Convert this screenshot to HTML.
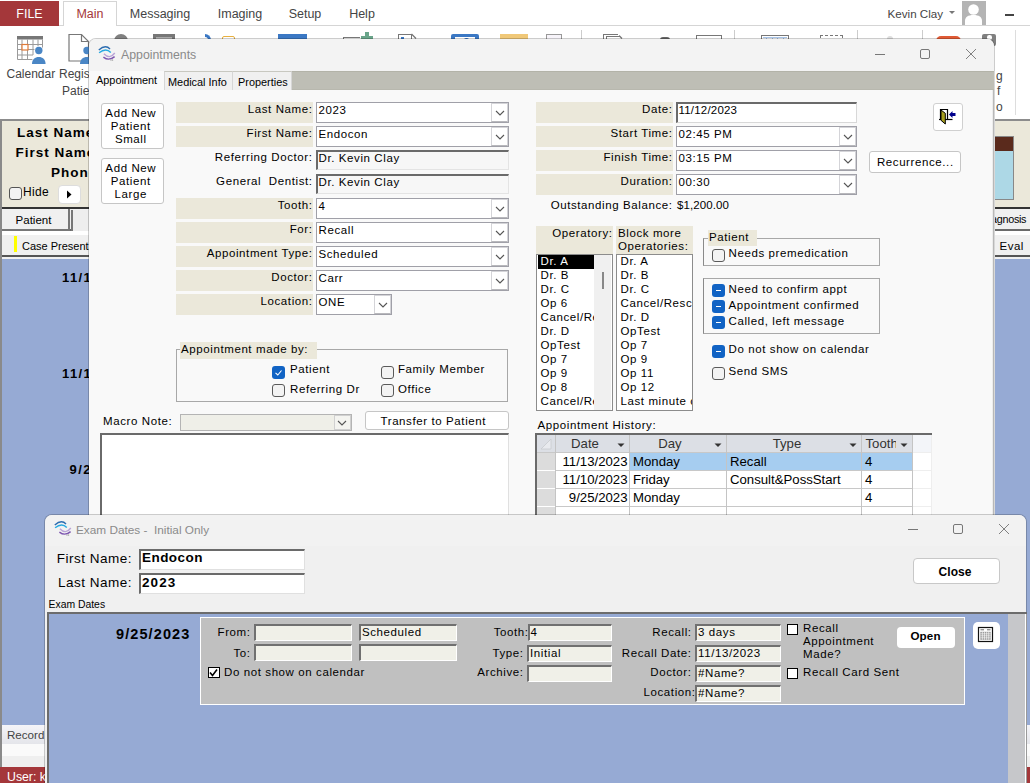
<!DOCTYPE html><html><head><meta charset="utf-8"><style>
*{margin:0;padding:0;box-sizing:border-box}
html,body{width:1030px;height:783px;overflow:hidden;background:#fff;position:relative;font-family:"Liberation Sans",sans-serif;color:#000}
.t{position:absolute;white-space:nowrap;line-height:1}
.r{position:absolute}
</style></head><body>
<div class="r" style="left:0px;top:0px;width:1030px;height:26px;background:#fff"></div>
<div class="r" style="left:0px;top:25px;width:1030px;height:1px;background:#d5d5d5"></div>
<div class="r" style="left:0px;top:1px;width:59px;height:25px;background:#a4373a"></div>
<div class="t" style="left:-0.5px;width:60px;text-align:center;top:7.92px;font-size:12.5px;color:#fff;">FILE</div>
<div class="r" style="left:63px;top:1px;width:54px;height:25px;background:#fff;border:1px solid #d5d5d5;border-bottom:none"></div>
<div class="t" style="left:60.0px;width:60px;text-align:center;top:8.42px;font-size:12.5px;color:#a4373a;">Main</div>
<div class="t" style="left:120.0px;width:80px;text-align:center;top:8.42px;font-size:12.5px;color:#444;">Messaging</div>
<div class="t" style="left:200.0px;width:80px;text-align:center;top:8.42px;font-size:12.5px;color:#444;">Imaging</div>
<div class="t" style="left:265.0px;width:80px;text-align:center;top:8.42px;font-size:12.5px;color:#444;">Setup</div>
<div class="t" style="left:322.0px;width:80px;text-align:center;top:8.42px;font-size:12.5px;color:#444;">Help</div>
<div class="t" style="left:843px;width:100px;text-align:right;top:7.68px;font-size:11.6px;color:#444;">Kevin Clay</div>
<svg class="r" style="left:948px;top:10px" width="8" height="6"><path d="M1 1h6l-3 3z" fill="#777"/></svg>
<div class="r" style="left:962px;top:1px;width:24px;height:24px;background:#b4b4b4"></div>
<svg class="r" style="left:962px;top:1px" width="24" height="24"><circle cx="11.5" cy="8.5" r="5.3" fill="#fff"/><path d="M3 24V20c0-4 3-6 8.5-6s8.5 2 8.5 6V24z" fill="#fff"/></svg>
<div class="r" style="left:1005px;top:14px;width:9px;height:2px;background:#444"></div>
<div class="r" style="left:0px;top:119px;width:1030px;height:2px;background:#8c8c8c"></div>
<svg class="r" style="left:16px;top:35px" width="32" height="32">
<rect x="1" y="1" width="26" height="3.5" fill="#777"/>
<path d="M1.5 4.5V24.5H27M26.5 4.5V14M1.5 9.5H26.5M1.5 14.5H26.5M1.5 20H17M6 4.5V24.5M11.5 4.5V24.5M17 4.5V20M22 4.5V12" stroke="#9a9a9a" stroke-width="1" fill="none"/>
<rect x="6" y="9.5" width="6" height="5.5" fill="#fff" stroke="#e07b39" stroke-width="1.2"/>
<circle cx="22.8" cy="15.5" r="4.6" fill="#fff"/><path d="M14.5 30c0-5 3.5-8.5 8.3-8.5s8.3 3.5 8.3 8.5z" fill="#fff"/>
<circle cx="22.8" cy="15.5" r="3.7" fill="#4a86c5"/><path d="M16 29c0-4.5 3-7 6.8-7s6.8 2.5 6.8 7z" fill="#4a86c5"/>
</svg>
<div class="t" style="left:6.5px;top:68.34px;font-size:12px;color:#444;">Calendar</div>
<svg class="r" style="left:68px;top:33px" width="24" height="32">
<path d="M1 1.5h12.5l7 7V28H1z" fill="#fff" stroke="#777" stroke-width="1.2"/><path d="M13.5 1.5v7h7" fill="none" stroke="#777" stroke-width="1.2"/>
<circle cx="19" cy="17.5" r="3.7" fill="#4a86c5"/><path d="M12 31c0-4.5 3-7 7-7s7 2.5 7 7z" fill="#4a86c5"/>
</svg>
<div class="t" style="left:59px;top:68.34px;font-size:12px;color:#444;">Regist</div>
<div class="t" style="left:62px;top:84.84px;font-size:12px;color:#444;">Patien</div>
<div class="r" style="left:114px;top:34px;width:14px;height:10px;background:#808080;border-radius:7px 7px 0 0"></div>
<div class="r" style="left:153px;top:34px;width:22px;height:8px;background:#777"></div>
<div class="r" style="left:156px;top:37px;width:16px;height:3px;background:#aaa"></div>
<div class="r" style="left:205px;top:34px;width:6px;height:8px;border-top:3px solid #3b78c4;border-right:3px solid #3b78c4;border-radius:0 8px 0 0"></div>
<div class="r" style="left:222px;top:36px;width:13px;height:6px;border:1.5px solid #e8b040;border-radius:2px"></div>
<div class="r" style="left:278px;top:34px;width:29px;height:8px;background:#3b78c4"></div>
<div class="r" style="left:343px;top:37px;width:17px;height:6px;border-top:1.5px solid #777;border-left:1.5px solid #777"></div>
<div class="r" style="left:365px;top:32px;width:4px;height:8px;background:#6aa58a"></div>
<div class="r" style="left:361px;top:36px;width:12px;height:4px;background:#6aa58a"></div>
<div class="r" style="left:398px;top:34px;width:14px;height:8px;border:1.5px solid #777;border-bottom:none"></div>
<svg class="r" style="left:411px;top:33px" width="6" height="6"><path d="M0.5 1L5 5.5" stroke="#777" stroke-width="1.3"/></svg>
<div class="r" style="left:401px;top:37px;width:3px;height:2px;background:#3b78c4"></div>
<div class="r" style="left:451px;top:34px;width:28px;height:8px;background:#3b78c4;border-radius:2px 2px 0 0"></div>
<div class="r" style="left:455px;top:37px;width:20px;height:6px;background:#fff"></div>
<div class="r" style="left:464px;top:38px;width:5px;height:2px;background:#3b78c4;border-radius:2px 2px 0 0"></div>
<div class="r" style="left:500px;top:34px;width:28px;height:8px;background:#f0c878"></div>
<div class="r" style="left:546px;top:34px;width:16px;height:8px;border:1.5px solid #999;background:#f7f4fa;border-bottom:none"></div>
<div class="r" style="left:581px;top:30px;width:1px;height:12px;background:#ccc"></div>
<div class="r" style="left:603px;top:34px;width:15px;height:8px;border-top:1.5px solid #777;border-left:1.5px solid #777"></div>
<div class="r" style="left:606px;top:36px;width:14px;height:6px;border:1.5px solid #777;border-bottom:none;border-right:none;background:#fff"></div>
<svg class="r" style="left:619px;top:35px" width="4" height="4"><path d="M0 0.5L3 3.5" stroke="#777" stroke-width="1.3"/></svg>
<div class="r" style="left:660px;top:36.5px;width:10px;height:5px;background:#666;border-radius:3px 3px 0 0"></div>
<div class="r" style="left:696px;top:35px;width:26px;height:8px;border:1.5px solid #777;border-bottom:none"></div>
<div class="r" style="left:734px;top:30px;width:1px;height:12px;background:#ccc"></div>
<div class="r" style="left:761px;top:35px;width:28px;height:8px;border:1.5px solid #777;border-bottom:none;background:#fff"></div>
<div class="r" style="left:766px;top:36.5px;width:1px;height:4px;background:#a8c4e8"></div>
<div class="r" style="left:772px;top:36.5px;width:1px;height:4px;background:#a8c4e8"></div>
<div class="r" style="left:777px;top:36.5px;width:1px;height:4px;background:#a8c4e8"></div>
<div class="r" style="left:783px;top:36.5px;width:1px;height:4px;background:#a8c4e8"></div>
<div class="r" style="left:763px;top:37px;width:24px;height:1px;background:#a8c4e8"></div>
<div class="r" style="left:820px;top:35px;width:23px;height:8px;border:1.5px dashed #777;border-bottom:none"></div>
<div class="r" style="left:857px;top:30px;width:1px;height:12px;background:#ccc"></div>
<div class="r" style="left:887px;top:36px;width:6px;height:4px;background:#ddd;border-radius:3px 3px 0 0"></div>
<div class="r" style="left:922px;top:30px;width:1px;height:12px;background:#ccc"></div>
<div class="r" style="left:936px;top:36px;width:25px;height:8px;background:#e05a35;border-radius:5px 5px 0 0"></div>
<div class="r" style="left:982px;top:34px;width:14px;height:12px;background:#808080;border-radius:2px"></div>
<div class="r" style="left:987px;top:35px;width:4.5px;height:4.5px;background:#fff;border-radius:50%"></div>
<div class="r" style="left:1015px;top:30px;width:1px;height:85px;background:#ddd"></div>
<div class="t" style="left:996px;top:69.84px;font-size:12px;color:#444;">g</div>
<div class="t" style="left:997px;top:84.84px;font-size:12px;color:#444;">f</div>
<div class="t" style="left:996px;top:100.84px;font-size:12px;color:#444;">o</div>
<div class="r" style="left:0px;top:121px;width:1030px;height:86px;background:#ebe8da"></div>
<div class="t" style="left:17px;top:126.17px;font-size:13.5px;font-weight:bold;letter-spacing:1.0px;">Last Name</div>
<div class="t" style="left:15.5px;top:146.07px;font-size:13.5px;font-weight:bold;letter-spacing:1.0px;">First Name</div>
<div class="t" style="left:51px;top:165.77px;font-size:13.5px;font-weight:bold;letter-spacing:1.0px;">Phone</div>
<div class="r" style="left:9px;top:187px;width:13px;height:13px;background:#f3f3f3;border:1px solid #555;border-radius:3px"></div>
<div class="t" style="left:23px;top:185.84px;font-size:12px;letter-spacing:0.3px;">Hide</div>
<div class="r" style="left:58px;top:185px;width:23px;height:19px;background:#fff;border:1px solid #ddd;border-radius:4px"></div>
<svg class="r" style="left:66px;top:190px" width="8" height="9"><path d="M1 0.5L5.5 4.5L1 8.5z" fill="#000"/></svg>
<div class="r" style="left:994px;top:136px;width:20px;height:64px;background:#add8e6;border:1px solid #888"></div>
<div class="r" style="left:994px;top:137px;width:19px;height:14px;background:#5a2a1c"></div>
<div class="r" style="left:0px;top:207px;width:1030px;height:2px;background:#333"></div>
<div class="r" style="left:0px;top:209px;width:1030px;height:22px;background:#f0f0f0;border-bottom:2px solid #6a6a6a"></div>
<div class="r" style="left:0px;top:209px;width:70px;height:22px;background:#f0f0f0;border-right:2px solid #777;border-bottom:2px solid #777"></div>
<div class="t" style="left:-1.5px;width:70px;text-align:center;top:214.96px;font-size:11.5px;">Patient</div>
<div class="r" style="left:71px;top:210px;width:20px;height:21px;background:#eee;border-left:2px solid #777"></div>
<div class="t" style="left:966.2px;width:60px;text-align:right;top:214.36px;font-size:10.8px;letter-spacing:-0.3px;">agnosis</div>
<div class="r" style="left:0px;top:231px;width:1030px;height:4px;background:#fff"></div>
<div class="r" style="left:0px;top:235px;width:1030px;height:20px;background:#f0f0f0"></div>
<div class="r" style="left:14px;top:236px;width:3px;height:16px;background:#ff0"></div>
<div class="t" style="left:22px;top:241.19px;font-size:11px;">Case Presentation</div>
<div class="t" style="left:999.5px;top:240.76px;font-size:11.5px;letter-spacing:0.5px;">Eval</div>
<div class="r" style="left:0px;top:255px;width:1030px;height:2px;background:#555"></div>
<div class="r" style="left:0px;top:257px;width:1030px;height:2px;background:#f0f0f0"></div>
<div class="r" style="left:2px;top:259px;width:1028px;height:467px;background:#96aad4"></div>
<div class="t" style="left:62px;top:271.49px;font-size:13px;font-weight:bold;letter-spacing:1.4px;">11/14/2023</div>
<div class="t" style="left:62px;top:367.49px;font-size:13px;font-weight:bold;letter-spacing:1.4px;">11/13/2023</div>
<div class="t" style="left:69.5px;top:463.49px;font-size:13px;font-weight:bold;letter-spacing:1.4px;">9/25/2023</div>
<div class="r" style="left:2px;top:725px;width:1028px;height:19px;background:linear-gradient(#f4f4f8,#e4e5ea)"></div>
<div class="t" style="left:7px;top:728.88px;font-size:11.6px;color:#444;">Record:</div>
<div class="r" style="left:2px;top:744px;width:1028px;height:12px;background:#fafafa"></div>
<div class="r" style="left:2px;top:756px;width:1028px;height:11px;background:#efefef"></div>
<div class="r" style="left:0px;top:121px;width:2px;height:646px;background:#8a8a8a"></div>
<div class="r" style="left:0px;top:767px;width:1030px;height:16px;background:#a4373a"></div>
<div class="t" style="left:7px;top:771.09px;font-size:12.3px;color:#fff;">User: kevin</div>
<div class="r" style="left:88px;top:38px;width:907px;height:480px;background:#f9f9f9;border:1px solid rgba(0,0,0,0.2);border-radius:8px 8px 0 0;background-clip:padding-box"></div>
<div class="r" style="left:89px;top:39px;width:905px;height:32px;background:#f3f3f3;border-radius:7px 7px 0 0"></div>
<svg class="r" style="left:98px;top:45px" width="19" height="17">
<path d="M0.8 4.9Q7.4 -1 12 3.9" stroke="#2b6cb0" stroke-width="1.4" fill="none"/>
<path d="M1.1 7.8Q7.85 2.15 12.8 7.5" stroke="#27a9e1" stroke-width="1.4" fill="none"/>
<path d="M5.9 8.8Q11.65 14.8 16.8 8" stroke="#b9a3d8" stroke-width="1.4" fill="none"/>
<path d="M5.4 12.1Q11 16.35 16.6 11.6" stroke="#7d55b0" stroke-width="1.4" fill="none"/>
<circle cx="13" cy="15" r="0.6" fill="#777"/><circle cx="14.6" cy="15" r="0.6" fill="#777"/>
</svg>
<div class="t" style="left:121px;top:48.69px;font-size:12.3px;color:#8a8a8a;">Appointments</div>
<div class="r" style="left:875px;top:54px;width:10px;height:1px;background:#777"></div>
<div class="r" style="left:920px;top:49px;width:10px;height:10px;border:1px solid #777;border-radius:2px"></div>
<svg class="r" style="left:965px;top:48px" width="12" height="12"><path d="M1 1L11 11M11 1L1 11" stroke="#808080" stroke-width="1"/></svg>
<div class="r" style="left:89px;top:71px;width:905px;height:19px;background:#bebeb5;border-top:1px solid #b3b3a8;border-bottom:1px solid #b8b8ae"></div>
<div class="r" style="left:89px;top:71px;width:75px;height:20px;background:#f9f9f9"></div>
<div class="r" style="left:164px;top:71px;width:69px;height:19px;background:#f0f0f0;border:1px solid #d6d6d6;border-bottom:none;border-top-color:#c8c8c0"></div>
<div class="r" style="left:232px;top:71px;width:60px;height:19px;background:#f0f0f0;border:1px solid #d6d6d6;border-bottom:none;border-top-color:#c8c8c0"></div>
<div class="t" style="left:96px;top:75.27px;font-size:10.9px;">Appointment</div>
<div class="t" style="left:168px;top:77.07px;font-size:10.9px;">Medical Info</div>
<div class="t" style="left:238px;top:77.07px;font-size:10.9px;">Properties</div>
<div class="r" style="left:89px;top:90px;width:905px;height:1px;background:#f9f9f9"></div>
<div class="r" style="left:101px;top:103px;width:63px;height:46px;background:#fff;border:1px solid #c6c6c6;border-radius:3px"></div>
<div class="t" style="left:89.30000000000001px;width:83px;text-align:center;top:107.96px;font-size:11.5px;letter-spacing:0.6px;">Add New</div>
<div class="t" style="left:89.30000000000001px;width:83px;text-align:center;top:120.96px;font-size:11.5px;letter-spacing:0.6px;">Patient</div>
<div class="t" style="left:89.30000000000001px;width:83px;text-align:center;top:133.96px;font-size:11.5px;letter-spacing:0.6px;">Small</div>
<div class="r" style="left:101px;top:158px;width:63px;height:46px;background:#fff;border:1px solid #c6c6c6;border-radius:3px"></div>
<div class="t" style="left:89.30000000000001px;width:83px;text-align:center;top:162.96px;font-size:11.5px;letter-spacing:0.6px;">Add New</div>
<div class="t" style="left:89.30000000000001px;width:83px;text-align:center;top:175.96px;font-size:11.5px;letter-spacing:0.6px;">Patient</div>
<div class="t" style="left:89.30000000000001px;width:83px;text-align:center;top:188.96px;font-size:11.5px;letter-spacing:0.6px;">Large</div>
<div class="r" style="left:176px;top:102px;width:137px;height:21px;background:#ebe8da"></div>
<div class="r" style="left:316px;top:102px;width:193px;height:21px;background:#fff;border:1px solid #a0a0a8"></div>
<div class="r" style="left:491px;top:103px;width:17px;height:19px;background:#fff;border:1px solid #d4d4d8;border-bottom-color:#b8b8bc"></div>
<svg class="r" style="left:495px;top:109.5px" width="10" height="6"><path d="M1 1L5 5L9 1" stroke="#555" stroke-width="1.1" fill="none"/></svg>
<div class="t" style="left:318.5px;top:104.76px;font-size:11.5px;letter-spacing:0.6px;">2023</div>
<div class="t" style="left:172.60000000000002px;width:140px;text-align:right;top:104.06px;font-size:11.5px;letter-spacing:0.6px;">Last Name:</div>
<div class="r" style="left:176px;top:126px;width:137px;height:21px;background:#ebe8da"></div>
<div class="r" style="left:316px;top:126px;width:193px;height:21px;background:#fff;border:1px solid #a0a0a8"></div>
<div class="r" style="left:491px;top:127px;width:17px;height:19px;background:#fff;border:1px solid #d4d4d8;border-bottom-color:#b8b8bc"></div>
<svg class="r" style="left:495px;top:133.5px" width="10" height="6"><path d="M1 1L5 5L9 1" stroke="#555" stroke-width="1.1" fill="none"/></svg>
<div class="t" style="left:318.5px;top:128.76px;font-size:11.5px;letter-spacing:0.6px;">Endocon</div>
<div class="t" style="left:172.60000000000002px;width:140px;text-align:right;top:128.06px;font-size:11.5px;letter-spacing:0.6px;">First Name:</div>
<div class="r" style="left:316px;top:150px;width:193px;height:20px;background:#f7f7f7;border-top:2px solid #6a6a6a;border-left:2px solid #6a6a6a;border-right:1px solid #e4e4e4;border-bottom:1px solid #e4e4e4"></div>
<div class="t" style="left:318.5px;top:152.76px;font-size:11.5px;letter-spacing:0.6px;">Dr. Kevin Clay</div>
<div class="t" style="left:172.60000000000002px;width:140px;text-align:right;top:152.06px;font-size:11.5px;letter-spacing:0.6px;">Referring Doctor:</div>
<div class="r" style="left:316px;top:174px;width:193px;height:20px;background:#f7f7f7;border-top:2px solid #6a6a6a;border-left:2px solid #6a6a6a;border-right:1px solid #e4e4e4;border-bottom:1px solid #e4e4e4"></div>
<div class="t" style="left:318.5px;top:176.76px;font-size:11.5px;letter-spacing:0.6px;">Dr. Kevin Clay</div>
<div class="t" style="left:172.60000000000002px;width:140px;text-align:right;top:176.06px;font-size:11.5px;letter-spacing:0.6px;">General&nbsp; Dentist:</div>
<div class="r" style="left:176px;top:198px;width:137px;height:21px;background:#ebe8da"></div>
<div class="r" style="left:316px;top:198px;width:193px;height:21px;background:#fff;border:1px solid #a0a0a8"></div>
<div class="r" style="left:491px;top:199px;width:17px;height:19px;background:#fff;border:1px solid #d4d4d8;border-bottom-color:#b8b8bc"></div>
<svg class="r" style="left:495px;top:205.5px" width="10" height="6"><path d="M1 1L5 5L9 1" stroke="#555" stroke-width="1.1" fill="none"/></svg>
<div class="t" style="left:318.5px;top:200.76px;font-size:11.5px;letter-spacing:0.6px;">4</div>
<div class="t" style="left:172.60000000000002px;width:140px;text-align:right;top:200.06px;font-size:11.5px;letter-spacing:0.6px;">Tooth:</div>
<div class="r" style="left:176px;top:222px;width:137px;height:21px;background:#ebe8da"></div>
<div class="r" style="left:316px;top:222px;width:193px;height:21px;background:#fff;border:1px solid #a0a0a8"></div>
<div class="r" style="left:491px;top:223px;width:17px;height:19px;background:#fff;border:1px solid #d4d4d8;border-bottom-color:#b8b8bc"></div>
<svg class="r" style="left:495px;top:229.5px" width="10" height="6"><path d="M1 1L5 5L9 1" stroke="#555" stroke-width="1.1" fill="none"/></svg>
<div class="t" style="left:318.5px;top:224.76px;font-size:11.5px;letter-spacing:0.6px;">Recall</div>
<div class="t" style="left:172.60000000000002px;width:140px;text-align:right;top:224.06px;font-size:11.5px;letter-spacing:0.6px;">For:</div>
<div class="r" style="left:176px;top:246px;width:137px;height:21px;background:#ebe8da"></div>
<div class="r" style="left:316px;top:246px;width:193px;height:21px;background:#fff;border:1px solid #a0a0a8"></div>
<div class="r" style="left:491px;top:247px;width:17px;height:19px;background:#fff;border:1px solid #d4d4d8;border-bottom-color:#b8b8bc"></div>
<svg class="r" style="left:495px;top:253.5px" width="10" height="6"><path d="M1 1L5 5L9 1" stroke="#555" stroke-width="1.1" fill="none"/></svg>
<div class="t" style="left:318.5px;top:248.76px;font-size:11.5px;letter-spacing:0.6px;">Scheduled</div>
<div class="t" style="left:172.60000000000002px;width:140px;text-align:right;top:248.06px;font-size:11.5px;letter-spacing:0.6px;">Appointment Type:</div>
<div class="r" style="left:176px;top:270px;width:137px;height:21px;background:#ebe8da"></div>
<div class="r" style="left:316px;top:270px;width:193px;height:21px;background:#fff;border:1px solid #a0a0a8"></div>
<div class="r" style="left:491px;top:271px;width:17px;height:19px;background:#fff;border:1px solid #d4d4d8;border-bottom-color:#b8b8bc"></div>
<svg class="r" style="left:495px;top:277.5px" width="10" height="6"><path d="M1 1L5 5L9 1" stroke="#555" stroke-width="1.1" fill="none"/></svg>
<div class="t" style="left:318.5px;top:272.76px;font-size:11.5px;letter-spacing:0.6px;">Carr</div>
<div class="t" style="left:172.60000000000002px;width:140px;text-align:right;top:272.06px;font-size:11.5px;letter-spacing:0.6px;">Doctor:</div>
<div class="r" style="left:176px;top:294px;width:137px;height:21px;background:#ebe8da"></div>
<div class="r" style="left:316px;top:294px;width:76px;height:21px;background:#fff;border:1px solid #a0a0a8"></div>
<div class="r" style="left:374px;top:295px;width:17px;height:19px;background:#fff;border:1px solid #d4d4d8;border-bottom-color:#b8b8bc"></div>
<svg class="r" style="left:378px;top:301.5px" width="10" height="6"><path d="M1 1L5 5L9 1" stroke="#555" stroke-width="1.1" fill="none"/></svg>
<div class="t" style="left:318.5px;top:296.76px;font-size:11.5px;letter-spacing:0.6px;">ONE</div>
<div class="t" style="left:172.60000000000002px;width:140px;text-align:right;top:296.06px;font-size:11.5px;letter-spacing:0.6px;">Location:</div>
<div class="r" style="left:176px;top:349px;width:332px;height:53px;border:1px solid #a8a8a8;border-top-color:#a8a8a8"></div>
<div class="r" style="left:180px;top:342px;width:137px;height:16.5px;background:#ebe8da"></div>
<div class="t" style="left:181px;top:344.26px;font-size:11.5px;letter-spacing:0.6px;">Appointment made by:</div>
<div class="r" style="left:272px;top:366px;width:13px;height:13px;background:#1163c4;border-radius:3px"></div>
<svg class="r" style="left:272px;top:366px" width="13" height="13"><path d="M3.5 6.8L5.8 9L9.5 4.5" stroke="#fff" stroke-width="1.1" fill="none"/></svg>
<div class="t" style="left:290px;top:364.26px;font-size:11.5px;letter-spacing:0.6px;">Patient</div>
<div class="r" style="left:381px;top:366px;width:13px;height:13px;background:#f3f3f3;border:1px solid #5a5a5a;border-radius:3px"></div>
<div class="t" style="left:398px;top:364.26px;font-size:11.5px;letter-spacing:0.6px;">Family Member</div>
<div class="r" style="left:272px;top:384px;width:13px;height:13px;background:#f3f3f3;border:1px solid #5a5a5a;border-radius:3px"></div>
<div class="t" style="left:290px;top:384.26px;font-size:11.5px;letter-spacing:0.6px;">Referring Dr</div>
<div class="r" style="left:381px;top:384px;width:13px;height:13px;background:#f3f3f3;border:1px solid #5a5a5a;border-radius:3px"></div>
<div class="t" style="left:398px;top:384.26px;font-size:11.5px;letter-spacing:0.6px;">Office</div>
<div class="t" style="left:103px;top:416.26px;font-size:11.5px;letter-spacing:0.6px;">Macro Note:</div>
<div class="r" style="left:180px;top:414px;width:172px;height:17px;background:#efefe8;border:1px solid #b4b4b4"></div>
<div class="r" style="left:334px;top:415px;width:17px;height:15px;background:#f4f4f0;border:1px solid #d0d0d0"></div>
<svg class="r" style="left:337px;top:420px" width="10" height="6"><path d="M1 1L5 5L9 1" stroke="#555" stroke-width="1.1" fill="none"/></svg>
<div class="r" style="left:365px;top:411px;width:144px;height:19px;background:#fff;border:1px solid #c6c6c6;border-radius:3px"></div>
<div class="t" style="left:351.3px;width:164px;text-align:center;top:415.76px;font-size:11.5px;letter-spacing:0.6px;">Transfer to Patient</div>
<div class="r" style="left:100px;top:433px;width:409px;height:90px;background:#fff;border-top:2px solid #6a6a6a;border-left:2px solid #6a6a6a;border-right:1px solid #e0e0e0"></div>
<div class="r" style="left:536px;top:102px;width:137px;height:21px;background:#ebe8da"></div>
<div class="r" style="left:676px;top:102px;width:181px;height:21px;background:#fff;border-top:2px solid #6a6a6a;border-left:2px solid #6a6a6a;border-right:1px solid #d8d8d8;border-bottom:1px solid #d8d8d8"></div>
<div class="t" style="left:678.5px;top:104.76px;font-size:11.5px;letter-spacing:0.2px;">11/12/2023</div>
<div class="t" style="left:532.6px;width:140px;text-align:right;top:104.06px;font-size:11.5px;letter-spacing:0.6px;">Date:</div>
<div class="r" style="left:536px;top:126px;width:137px;height:21px;background:#ebe8da"></div>
<div class="r" style="left:676px;top:126px;width:181px;height:21px;background:#fff;border:1px solid #a0a0a8"></div>
<div class="r" style="left:839px;top:127px;width:17px;height:19px;background:#fff;border:1px solid #d4d4d8;border-bottom-color:#b8b8bc"></div>
<svg class="r" style="left:843px;top:133.5px" width="10" height="6"><path d="M1 1L5 5L9 1" stroke="#555" stroke-width="1.1" fill="none"/></svg>
<div class="t" style="left:678.5px;top:128.76px;font-size:11.5px;letter-spacing:0.6px;">02:45 PM</div>
<div class="t" style="left:532.6px;width:140px;text-align:right;top:128.06px;font-size:11.5px;letter-spacing:0.6px;">Start Time:</div>
<div class="r" style="left:536px;top:150px;width:137px;height:21px;background:#ebe8da"></div>
<div class="r" style="left:676px;top:150px;width:181px;height:21px;background:#fff;border:1px solid #a0a0a8"></div>
<div class="r" style="left:839px;top:151px;width:17px;height:19px;background:#fff;border:1px solid #d4d4d8;border-bottom-color:#b8b8bc"></div>
<svg class="r" style="left:843px;top:157.5px" width="10" height="6"><path d="M1 1L5 5L9 1" stroke="#555" stroke-width="1.1" fill="none"/></svg>
<div class="t" style="left:678.5px;top:152.76px;font-size:11.5px;letter-spacing:0.6px;">03:15 PM</div>
<div class="t" style="left:532.6px;width:140px;text-align:right;top:152.06px;font-size:11.5px;letter-spacing:0.6px;">Finish Time:</div>
<div class="r" style="left:536px;top:174px;width:137px;height:21px;background:#ebe8da"></div>
<div class="r" style="left:676px;top:174px;width:181px;height:21px;background:#fff;border:1px solid #a0a0a8"></div>
<div class="r" style="left:839px;top:175px;width:17px;height:19px;background:#fff;border:1px solid #d4d4d8;border-bottom-color:#b8b8bc"></div>
<svg class="r" style="left:843px;top:181.5px" width="10" height="6"><path d="M1 1L5 5L9 1" stroke="#555" stroke-width="1.1" fill="none"/></svg>
<div class="t" style="left:678.5px;top:176.76px;font-size:11.5px;letter-spacing:0.6px;">00:30</div>
<div class="t" style="left:532.6px;width:140px;text-align:right;top:176.06px;font-size:11.5px;letter-spacing:0.6px;">Duration:</div>
<div class="t" style="left:512.6px;width:160px;text-align:right;top:199.96px;font-size:11.5px;letter-spacing:0.6px;">Outstanding Balance:</div>
<div class="t" style="left:677px;top:199.96px;font-size:11.5px;letter-spacing:0.1px;">$1,200.00</div>
<div class="r" style="left:933px;top:103px;width:30px;height:28px;background:#fff;border:1px solid #d0d0d0;border-radius:3px"></div>
<svg class="r" style="left:933px;top:103px" width="30" height="28">
<path d="M7.5 16.5V6.5H14.5V16.5" fill="none" stroke="#000" stroke-width="1.2"/>
<path d="M6 16.5H19.5" stroke="#000" stroke-width="1.2"/>
<path d="M8 7L12.3 10.3V21L8 17.3z" fill="#a8a020" stroke="#000" stroke-width="1"/>
<path d="M16 11.5L19.5 8V10H22.5V13H19.5V15z" fill="#00008c"/>
</svg>
<div class="r" style="left:869px;top:151px;width:92px;height:22px;background:#fff;border:1px solid #c6c6c6;border-radius:3px"></div>
<div class="t" style="left:859.3px;width:112px;text-align:center;top:157.26px;font-size:11.5px;letter-spacing:0.6px;">Recurrence...</div>
<div class="r" style="left:536px;top:226px;width:77px;height:28px;background:#ebe8da"></div>
<div class="r" style="left:616px;top:226px;width:77px;height:28px;background:#ebe8da"></div>
<div class="t" style="left:512.6px;width:100px;text-align:right;top:228.26px;font-size:11.5px;letter-spacing:0.6px;">Operatory:</div>
<div class="t" style="left:618px;top:228.26px;font-size:11.5px;letter-spacing:0.6px;">Block more</div>
<div class="t" style="left:618px;top:240.76px;font-size:11.5px;letter-spacing:0.6px;">Operatories:</div>
<div class="r" style="left:536px;top:254px;width:77px;height:157px;background:#fff;border:1px solid #8c8c8c"></div>
<div class="r" style="left:594px;top:255px;width:17px;height:155px;background:#f0f0f0"></div>
<div class="r" style="left:602px;top:272px;width:2px;height:17px;background:#888"></div>
<div class="r" style="left:538px;top:255px;width:56px;height:13.5px;background:#000"></div>
<div class="r" style="left:537px;top:255px;width:57px;height:155px;overflow:hidden">
<div class="t" style="left:3.5px;top:1.26px;font-size:11.5px;letter-spacing:0.6px;color:#fff">Dr. A</div>
<div class="t" style="left:3.5px;top:15.26px;font-size:11.5px;letter-spacing:0.6px;color:#000">Dr. B</div>
<div class="t" style="left:3.5px;top:29.26px;font-size:11.5px;letter-spacing:0.6px;color:#000">Dr. C</div>
<div class="t" style="left:3.5px;top:43.26px;font-size:11.5px;letter-spacing:0.6px;color:#000">Op 6</div>
<div class="t" style="left:3.5px;top:57.26px;font-size:11.5px;letter-spacing:0.6px;color:#000">Cancel/Resc</div>
<div class="t" style="left:3.5px;top:71.26px;font-size:11.5px;letter-spacing:0.6px;color:#000">Dr. D</div>
<div class="t" style="left:3.5px;top:85.26px;font-size:11.5px;letter-spacing:0.6px;color:#000">OpTest</div>
<div class="t" style="left:3.5px;top:99.26px;font-size:11.5px;letter-spacing:0.6px;color:#000">Op 7</div>
<div class="t" style="left:3.5px;top:113.26px;font-size:11.5px;letter-spacing:0.6px;color:#000">Op 9</div>
<div class="t" style="left:3.5px;top:127.26px;font-size:11.5px;letter-spacing:0.6px;color:#000">Op 8</div>
<div class="t" style="left:3.5px;top:141.26px;font-size:11.5px;letter-spacing:0.6px;color:#000">Cancel/Resc</div>
</div>
<div class="r" style="left:616px;top:254px;width:77px;height:157px;background:#fff;border:1px solid #8c8c8c"></div>
<div class="r" style="left:617px;top:255px;width:75px;height:155px;overflow:hidden">
<div class="t" style="left:3.5px;top:1.26px;font-size:11.5px;letter-spacing:0.6px">Dr. A</div>
<div class="t" style="left:3.5px;top:15.26px;font-size:11.5px;letter-spacing:0.6px">Dr. B</div>
<div class="t" style="left:3.5px;top:29.26px;font-size:11.5px;letter-spacing:0.6px">Dr. C</div>
<div class="t" style="left:3.5px;top:43.26px;font-size:11.5px;letter-spacing:0.6px">Cancel/Resc</div>
<div class="t" style="left:3.5px;top:57.26px;font-size:11.5px;letter-spacing:0.6px">Dr. D</div>
<div class="t" style="left:3.5px;top:71.26px;font-size:11.5px;letter-spacing:0.6px">OpTest</div>
<div class="t" style="left:3.5px;top:85.26px;font-size:11.5px;letter-spacing:0.6px">Op 7</div>
<div class="t" style="left:3.5px;top:99.26px;font-size:11.5px;letter-spacing:0.6px">Op 9</div>
<div class="t" style="left:3.5px;top:113.26px;font-size:11.5px;letter-spacing:0.6px">Op 11</div>
<div class="t" style="left:3.5px;top:127.26px;font-size:11.5px;letter-spacing:0.6px">Op 12</div>
<div class="t" style="left:3.5px;top:141.26px;font-size:11.5px;letter-spacing:0.6px">Last minute c</div>
</div>
<div class="r" style="left:703px;top:238px;width:177px;height:28px;border:1px solid #a8a8a8;border-left-color:#8a8a8a"></div>
<div class="r" style="left:708px;top:230px;width:49px;height:16px;background:#ebe8da"></div>
<div class="t" style="left:709px;top:232.26px;font-size:11.5px;letter-spacing:0.6px;">Patient</div>
<div class="r" style="left:712px;top:249px;width:13px;height:13px;background:#f3f3f3;border:1px solid #5a5a5a;border-radius:3px"></div>
<div class="t" style="left:728.5px;top:248.26px;font-size:11.5px;letter-spacing:0.6px;">Needs premedication</div>
<div class="r" style="left:703px;top:278px;width:177px;height:56px;border:1px solid #a8a8a8;border-left-color:#8a8a8a"></div>
<div class="r" style="left:712px;top:284px;width:13px;height:13px;background:#1163c4;border-radius:3px"></div>
<div class="r" style="left:716px;top:290px;width:5px;height:1.3px;background:#fff"></div>
<div class="t" style="left:728.5px;top:284.26px;font-size:11.5px;letter-spacing:0.6px;">Need to confirm appt</div>
<div class="r" style="left:712px;top:300px;width:13px;height:13px;background:#1163c4;border-radius:3px"></div>
<div class="r" style="left:716px;top:306px;width:5px;height:1.3px;background:#fff"></div>
<div class="t" style="left:728.5px;top:300.26px;font-size:11.5px;letter-spacing:0.6px;">Appointment confirmed</div>
<div class="r" style="left:712px;top:316px;width:13px;height:13px;background:#1163c4;border-radius:3px"></div>
<div class="r" style="left:716px;top:322px;width:5px;height:1.3px;background:#fff"></div>
<div class="t" style="left:728.5px;top:316.26px;font-size:11.5px;letter-spacing:0.6px;">Called, left message</div>
<div class="r" style="left:712px;top:344.5px;width:13px;height:13px;background:#1163c4;border-radius:3px"></div>
<div class="r" style="left:716px;top:350.5px;width:5px;height:1.3px;background:#fff"></div>
<div class="t" style="left:728.5px;top:343.76px;font-size:11.5px;letter-spacing:0.6px;">Do not show on calendar</div>
<div class="r" style="left:712px;top:366.5px;width:13px;height:13px;background:#f3f3f3;border:1px solid #5a5a5a;border-radius:3px"></div>
<div class="t" style="left:728.5px;top:366.26px;font-size:11.5px;letter-spacing:0.6px;">Send SMS</div>
<div class="t" style="left:537.5px;top:420.26px;font-size:11.5px;letter-spacing:0.6px;">Appointment History:</div>
<div class="r" style="left:535px;top:433px;width:397px;height:90px;background:#fff;border-top:2px solid #6a6a6a;border-left:2px solid #6a6a6a"></div>
<div class="r" style="left:537px;top:435px;width:375px;height:17px;background:#dcdfe5"></div>
<div class="r" style="left:913px;top:435px;width:19px;height:17px;background:#f3f5f9"></div>
<div class="r" style="left:537px;top:452px;width:18px;height:70px;background:#dcdcdc"></div>
<div class="r" style="left:630px;top:452px;width:282px;height:18px;background:#a6cdf0"></div>
<div class="r" style="left:537px;top:452px;width:375px;height:1px;background:#c8c8c8"></div>
<div class="r" style="left:913px;top:452px;width:19px;height:1px;background:#eeeeee"></div>
<div class="r" style="left:537px;top:470px;width:375px;height:1px;background:#c8c8c8"></div>
<div class="r" style="left:913px;top:470px;width:19px;height:1px;background:#eeeeee"></div>
<div class="r" style="left:537px;top:488px;width:375px;height:1px;background:#c8c8c8"></div>
<div class="r" style="left:913px;top:488px;width:19px;height:1px;background:#eeeeee"></div>
<div class="r" style="left:537px;top:506px;width:375px;height:1px;background:#c8c8c8"></div>
<div class="r" style="left:913px;top:506px;width:19px;height:1px;background:#eeeeee"></div>
<div class="r" style="left:537px;top:470px;width:18px;height:1px;background:#fff"></div>
<div class="r" style="left:537px;top:488px;width:18px;height:1px;background:#fff"></div>
<div class="r" style="left:537px;top:506px;width:18px;height:1px;background:#fff"></div>
<div class="r" style="left:555px;top:435px;width:1px;height:88px;background:#c4c4c4"></div>
<div class="r" style="left:629px;top:435px;width:1px;height:88px;background:#c4c4c4"></div>
<div class="r" style="left:726px;top:435px;width:1px;height:88px;background:#c4c4c4"></div>
<div class="r" style="left:861px;top:435px;width:1px;height:88px;background:#c4c4c4"></div>
<div class="r" style="left:912px;top:435px;width:1px;height:88px;background:#c4c4c4"></div>
<div class="r" style="left:931px;top:435px;width:1px;height:88px;background:#eeeeee"></div>
<svg class="r" style="left:540px;top:438px" width="12" height="12"><path d="M11 1V11H1z" fill="#e8eaee" stroke="#c8cace" stroke-width="0.8"/></svg>
<div class="t" style="left:555.0px;width:60px;text-align:center;top:437.32px;font-size:13.2px;color:#333;">Date</div>
<div class="t" style="left:640.0px;width:60px;text-align:center;top:437.32px;font-size:13.2px;color:#333;">Day</div>
<div class="t" style="left:757.0px;width:60px;text-align:center;top:437.32px;font-size:13.2px;color:#333;">Type</div>
<div class="r" style="left:862px;top:436px;width:34px;height:16px;overflow:hidden"><div class="t" style="left:3.5px;top:1.3px;font-size:13.2px;color:#333">Tooth</div></div>
<svg class="r" style="left:616.5px;top:443px" width="8" height="5"><path d="M0.5 0.5h7L4 4z" fill="#333"/></svg>
<svg class="r" style="left:713.5px;top:443px" width="8" height="5"><path d="M0.5 0.5h7L4 4z" fill="#333"/></svg>
<svg class="r" style="left:848.5px;top:443px" width="8" height="5"><path d="M0.5 0.5h7L4 4z" fill="#333"/></svg>
<svg class="r" style="left:899.5px;top:443px" width="8" height="5"><path d="M0.5 0.5h7L4 4z" fill="#333"/></svg>
<div class="t" style="left:547.5px;width:80px;text-align:right;top:455.42px;font-size:13.2px;">11/13/2023</div>
<div class="t" style="left:633px;top:455.42px;font-size:13.2px;">Monday</div>
<div class="t" style="left:730px;top:455.42px;font-size:13.2px;">Recall</div>
<div class="t" style="left:865px;top:455.42px;font-size:13.2px;">4</div>
<div class="t" style="left:547.5px;width:80px;text-align:right;top:473.42px;font-size:13.2px;">11/10/2023</div>
<div class="t" style="left:633px;top:473.42px;font-size:13.2px;">Friday</div>
<div class="t" style="left:730px;top:473.42px;font-size:13.2px;">Consult&amp;PossStart</div>
<div class="t" style="left:865px;top:473.42px;font-size:13.2px;">4</div>
<div class="t" style="left:547.5px;width:80px;text-align:right;top:491.42px;font-size:13.2px;">9/25/2023</div>
<div class="t" style="left:633px;top:491.42px;font-size:13.2px;">Monday</div>
<div class="t" style="left:730px;top:491.42px;font-size:13.2px;"></div>
<div class="t" style="left:865px;top:491.42px;font-size:13.2px;">4</div>
<div class="r" style="left:992px;top:90px;width:1px;height:426px;background:#ececec"></div>
<div class="r" style="left:993px;top:90px;width:1px;height:426px;background:#b8b8b8"></div>
<div class="r" style="left:994px;top:71px;width:1px;height:445px;background:#d8d8d8"></div>
<div class="r" style="left:44px;top:514px;width:983px;height:269px;background:#f0f0f0;border:1px solid rgba(0,0,0,0.2);border-bottom:none;border-radius:8px 8px 0 0;background-clip:padding-box"></div>
<div class="r" style="left:45px;top:515px;width:981px;height:31px;background:#f2f2f2;border-radius:7px 7px 0 0"></div>
<svg class="r" style="left:54px;top:520px" width="19" height="17">
<path d="M0.8 4.9Q7.4 -1 12 3.9" stroke="#2b6cb0" stroke-width="1.4" fill="none"/>
<path d="M1.1 7.8Q7.85 2.15 12.8 7.5" stroke="#27a9e1" stroke-width="1.4" fill="none"/>
<path d="M5.9 8.8Q11.65 14.8 16.8 8" stroke="#b9a3d8" stroke-width="1.4" fill="none"/>
<path d="M5.4 12.1Q11 16.35 16.6 11.6" stroke="#7d55b0" stroke-width="1.4" fill="none"/>
<circle cx="13" cy="15" r="0.6" fill="#777"/><circle cx="14.6" cy="15" r="0.6" fill="#777"/>
</svg>
<div class="t" style="left:76px;top:525.01px;font-size:11.8px;color:#8a8a8a;">Exam Dates -&nbsp; Initial Only</div>
<div class="r" style="left:908px;top:529px;width:10px;height:1px;background:#777"></div>
<div class="r" style="left:953px;top:524px;width:10px;height:10px;border:1px solid #777;border-radius:2px"></div>
<svg class="r" style="left:998px;top:523px" width="12" height="12"><path d="M1 1L11 11M11 1L1 11" stroke="#808080" stroke-width="1"/></svg>
<div class="t" style="left:32.0px;width:100px;text-align:right;top:551.57px;font-size:13.5px;letter-spacing:0.5px;">First Name:</div>
<div class="t" style="left:32.0px;width:100px;text-align:right;top:575.57px;font-size:13.5px;letter-spacing:0.5px;">Last Name:</div>
<div class="r" style="left:139px;top:548.5px;width:166px;height:21px;background:#fff;border-top:2px solid #6a6a6a;border-left:2px solid #6a6a6a;border-right:1px solid #e0e0e0;border-bottom:1px solid #e0e0e0"></div>
<div class="t" style="left:142px;top:551.37px;font-size:13.5px;font-weight:bold;letter-spacing:0.45px;">Endocon</div>
<div class="r" style="left:139px;top:573px;width:166px;height:21px;background:#fff;border-top:2px solid #6a6a6a;border-left:2px solid #6a6a6a;border-right:1px solid #e0e0e0;border-bottom:1px solid #e0e0e0"></div>
<div class="t" style="left:142px;top:575.87px;font-size:13.5px;font-weight:bold;letter-spacing:1.1px;">2023</div>
<div class="r" style="left:913px;top:558px;width:87px;height:26px;background:#fff;border:1px solid #c8c8c8;border-radius:4px"></div>
<div class="t" style="left:915.05px;width:80px;text-align:center;top:565.84px;font-size:12px;font-weight:bold;letter-spacing:0.1px;">Close</div>
<div class="t" style="left:48.5px;top:599.69px;font-size:10.4px;">Exam Dates</div>
<div class="r" style="left:47px;top:612px;width:980px;height:171px;background:#96aad4;border-top:2px solid #6c6c6c;border-left:2px solid #6c6c6c"></div>
<div class="r" style="left:1008px;top:614px;width:17px;height:169px;background:#c6c7ca"></div>
<div class="r" style="left:1025px;top:614px;width:1px;height:169px;background:#fff"></div>
<div class="r" style="left:1026px;top:614px;width:1px;height:169px;background:#9a9a9a"></div>
<div class="t" style="left:116px;top:626.72px;font-size:14.5px;font-weight:bold;letter-spacing:1.1px;">9/25/2023</div>
<div class="r" style="left:200px;top:617px;width:765px;height:88px;background:#c0c0c0;border-top:1px solid #fff;border-left:1px solid #fff;border-right:1px solid #fff;border-bottom:1px solid #fff"></div>
<div class="t" style="left:190.6px;width:60px;text-align:right;top:626.76px;font-size:11.5px;letter-spacing:0.6px;">From:</div>
<div class="t" style="left:190.6px;width:60px;text-align:right;top:647.76px;font-size:11.5px;letter-spacing:0.6px;">To:</div>
<div class="r" style="left:254px;top:623.5px;width:98px;height:17px;background:#f0f0e8;border-top:2px solid #707070;border-left:2px solid #707070;border-right:1px solid #fff;border-bottom:1px solid #fff"></div>
<div class="r" style="left:359px;top:623.5px;width:98px;height:17px;background:#f0f0e8;border-top:2px solid #707070;border-left:2px solid #707070;border-right:1px solid #fff;border-bottom:1px solid #fff"></div>
<div class="t" style="left:362px;top:626.56px;font-size:11.5px;letter-spacing:0.6px;">Scheduled</div>
<div class="r" style="left:254px;top:644px;width:98px;height:17px;background:#f0f0e8;border-top:2px solid #707070;border-left:2px solid #707070;border-right:1px solid #fff;border-bottom:1px solid #fff"></div>
<div class="r" style="left:359px;top:644px;width:98px;height:17px;background:#f0f0e8;border-top:2px solid #707070;border-left:2px solid #707070;border-right:1px solid #fff;border-bottom:1px solid #fff"></div>
<div class="r" style="left:207.5px;top:667px;width:12px;height:11px;background:#fff;border:1px solid #000"></div>
<svg class="r" style="left:207px;top:666px" width="13" height="13"><path d="M3 6.5L5.5 9.5L10 3.5" stroke="#000" stroke-width="1.6" fill="none"/></svg>
<div class="t" style="left:224px;top:667.26px;font-size:11.5px;letter-spacing:0.6px;">Do not show on calendar</div>
<div class="t" style="left:468.6px;width:60px;text-align:right;top:626.76px;font-size:11.5px;letter-spacing:0.6px;">Tooth:</div>
<div class="t" style="left:463.6px;width:60px;text-align:right;top:647.76px;font-size:11.5px;letter-spacing:0.6px;">Type:</div>
<div class="t" style="left:463.6px;width:60px;text-align:right;top:667.26px;font-size:11.5px;letter-spacing:0.6px;">Archive:</div>
<div class="r" style="left:527.5px;top:624px;width:84px;height:17px;background:#f0f0e8;border-top:2px solid #707070;border-left:2px solid #707070;border-right:1px solid #fff;border-bottom:1px solid #fff"></div>
<div class="t" style="left:530.5px;top:627.06px;font-size:11.5px;letter-spacing:0.6px;">4</div>
<div class="r" style="left:527px;top:644.5px;width:85px;height:17px;background:#f0f0e8;border-top:2px solid #707070;border-left:2px solid #707070;border-right:1px solid #fff;border-bottom:1px solid #fff"></div>
<div class="t" style="left:530px;top:647.56px;font-size:11.5px;letter-spacing:0.6px;">Initial</div>
<div class="r" style="left:527px;top:665px;width:85px;height:17px;background:#f0f0e8;border-top:2px solid #707070;border-left:2px solid #707070;border-right:1px solid #fff;border-bottom:1px solid #fff"></div>
<div class="t" style="left:591.6px;width:100px;text-align:right;top:626.76px;font-size:11.5px;letter-spacing:0.6px;">Recall:</div>
<div class="t" style="left:591.6px;width:100px;text-align:right;top:647.76px;font-size:11.5px;letter-spacing:0.6px;">Recall Date:</div>
<div class="t" style="left:591.6px;width:100px;text-align:right;top:667.26px;font-size:11.5px;letter-spacing:0.6px;">Doctor:</div>
<div class="t" style="left:595.6px;width:100px;text-align:right;top:686.76px;font-size:11.5px;letter-spacing:0.6px;">Location:</div>
<div class="r" style="left:695px;top:624px;width:86px;height:17px;background:#f0f0e8;border-top:2px solid #707070;border-left:2px solid #707070;border-right:1px solid #fff;border-bottom:1px solid #fff"></div>
<div class="t" style="left:698px;top:627.06px;font-size:11.5px;letter-spacing:0.6px;">3 days</div>
<div class="r" style="left:695px;top:645px;width:86px;height:17px;background:#f0f0e8;border-top:2px solid #707070;border-left:2px solid #707070;border-right:1px solid #fff;border-bottom:1px solid #fff"></div>
<div class="t" style="left:698px;top:648.06px;font-size:11.5px;letter-spacing:0.6px;">11/13/2023</div>
<div class="r" style="left:695px;top:665px;width:86px;height:17px;background:#f0f0e8;border-top:2px solid #707070;border-left:2px solid #707070;border-right:1px solid #fff;border-bottom:1px solid #fff"></div>
<div class="t" style="left:698px;top:668.06px;font-size:11.5px;letter-spacing:0.6px;">#Name?</div>
<div class="r" style="left:695px;top:685px;width:86px;height:17px;background:#f0f0e8;border-top:2px solid #707070;border-left:2px solid #707070;border-right:1px solid #fff;border-bottom:1px solid #fff"></div>
<div class="t" style="left:698px;top:688.06px;font-size:11.5px;letter-spacing:0.6px;">#Name?</div>
<div class="r" style="left:787px;top:623.5px;width:11px;height:11px;background:#fff;border:1px solid #000"></div>
<div class="t" style="left:803px;top:623.26px;font-size:11.5px;letter-spacing:0.6px;">Recall</div>
<div class="t" style="left:803px;top:636.06px;font-size:11.5px;letter-spacing:0.6px;">Appointment</div>
<div class="t" style="left:803px;top:649.06px;font-size:11.5px;letter-spacing:0.6px;">Made?</div>
<div class="r" style="left:787px;top:667.5px;width:11px;height:11px;background:#fff;border:1px solid #000"></div>
<div class="t" style="left:803px;top:667.26px;font-size:11.5px;letter-spacing:0.6px;">Recall Card Sent</div>
<div class="r" style="left:897px;top:627px;width:58px;height:21px;background:#fff;border-radius:4px"></div>
<div class="t" style="left:895.6px;width:60px;text-align:center;top:630.18px;font-size:11.6px;font-weight:bold;letter-spacing:0.2px;">Open</div>
<div class="r" style="left:973px;top:622px;width:27px;height:27px;background:#fff;border-radius:5px"></div>
<svg class="r" style="left:977px;top:626px" width="17" height="17">
<rect x="1.5" y="1.5" width="14" height="14" fill="#fff" stroke="#111" stroke-width="1.2"/>
<path d="M3.5 3.8h3.5M10 3.8h3.5" stroke="#444" stroke-width="0.8"/>
<rect x="3.3" y="5.8" width="10.4" height="8" fill="#9a9a9a"/>
<path d="M3.3 7.8h10.4M3.3 9.8h10.4M3.3 11.8h10.4M5.4 5.8v8M7.5 5.8v8M9.6 5.8v8M11.7 5.8v8" stroke="#fff" stroke-width="0.6"/>
</svg>
</body></html>
